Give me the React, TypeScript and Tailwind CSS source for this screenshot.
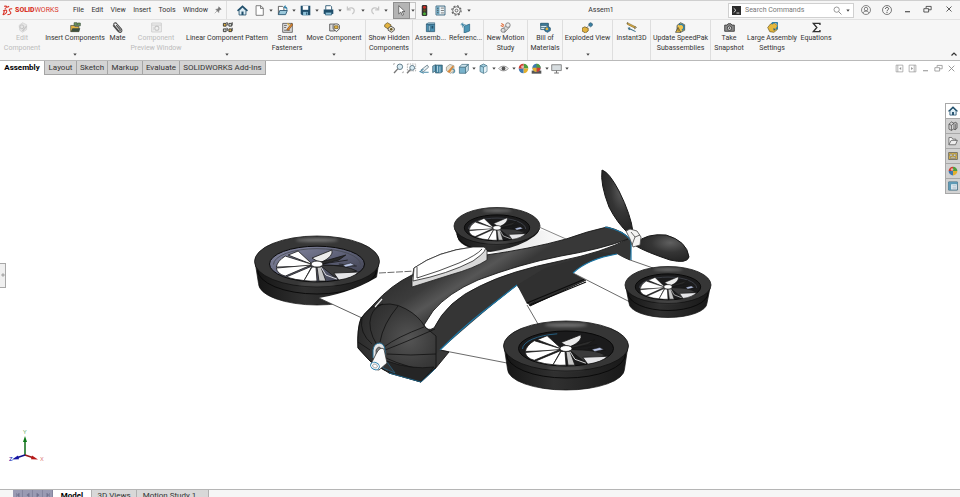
import React from "react";

type IconProps = { children: React.ReactNode; size?: string };

function Icon({ children, size = "size-[11px]" }: IconProps) {
  return (
    <svg viewBox="0 0 16 16" className={`${size} shrink-0`} fill="none" aria-hidden="true">
      {children}
    </svg>
  );
}

const BLUE = "#2f7fa6";
const NAVY = "#1f4e6b";
const GOLD = "#e3b341";
const INK = "#4a4a4a";

const art = {
  home: (
    <>
      <path d="M3 8v6.5h10V8L8 3z" fill="#dcecf4" stroke={NAVY} strokeWidth="1.2" />
      <path d="M.8 8.6 8 1.8l7.2 6.8" stroke={NAVY} strokeWidth="2.2" />
      <path d="M6.5 14.5V9.5h3v5z" fill={NAVY} />
    </>
  ),
  doc: <path d="M3 1h7l3.500 3.500V15H3zM9.500 1v4h4" fill="#fff" stroke="#666" strokeWidth="1.2" />,
  open: (
    <>
      <path d="M2 14V2h6l2 2v4" fill="#fff" stroke={INK} strokeWidth="1.2" />
      <path d="m2 14 2-6h11l-2.500 6z" fill="#9cc9dc" stroke={NAVY} strokeWidth="1.2" />
      <path d="M14.500 7c0-3-1-4-3-4M12.500 1 10.500 3l2 2" stroke={BLUE} strokeWidth="1.5" />
    </>
  ),
  save: (
    <>
      <path d="M1 1h14v14H3l-2-2z" fill={NAVY} />
      <path d="M4 1.500h8V7H4z" fill="#fff" />
      <path d="M4.500 10h7v5h-7z" fill="#8ec1d8" />
      <path d="M9 11h1.500v3H9z" fill={NAVY} />
    </>
  ),
  print: (
    <>
      <path d="M4 7V1h7l1.500 1.500V7" fill="#fff" stroke={NAVY} strokeWidth="1.2" />
      <path d="M1 6.500h14V13H1z" fill={NAVY} />
      <path d="M3.500 10.500h9v4h-9z" fill="#8ec1d8" stroke={NAVY} />
    </>
  ),
  undo: <path d="M2 2v5h5M2.500 6.500C6 2.500 12 4 12 8.500c0 2-1 3.500-3 4.500" stroke="#c6c6c6" strokeWidth="1.800" />,
  redo: <path d="M14 2v5H9M13.500 6.500C10 2.500 4 4 4 8.500c0 2 1 3.500 3 4.500" stroke="#c6c6c6" strokeWidth="1.800" />,
  cursor: <path d="M4 1v12l3-2.800L9 15l2-1-2-4.500h4z" fill="#fff" stroke="#444" />,
  traffic: (
    <>
      <rect x="4" y="0" width="8" height="16" rx="2" fill="#333" />
      <circle cx="8" cy="3.200" r="2.200" fill="#c62f25" />
      <circle cx="8" cy="8" r="1.800" fill="#6b5522" />
      <circle cx="8" cy="12.700" r="2.200" fill="#4caf38" />
    </>
  ),
  list: (
    <>
      <path d="M1.500 1.500h13v13h-13z" fill="#eef4f7" stroke={NAVY} strokeWidth="1.200" />
      <path d="M2 2h4.500v12H2z" fill="#69a3bd" />
      <path d="M8.500 4.500h4.500M8.500 8h4.500M8.500 11.500h4.500M3 5h2M3 8h2M3 11h2" stroke={INK} />
    </>
  ),
  gear: (
    <>
      <circle cx="8" cy="8" r="5.500" stroke="#555" strokeWidth="1.200" />
      <circle cx="8" cy="8" r="6.800" stroke="#555" strokeWidth="1.500" strokeDasharray="2.700 2.640" />
      <circle cx="8" cy="8" r="2" stroke="#555" strokeWidth="1.200" />
    </>
  ),
  user: (
    <>
      <circle cx="8" cy="8" r="7.200" stroke="#555" strokeWidth="1.100" />
      <circle cx="8" cy="6.500" r="2.800" stroke="#555" strokeWidth="1.100" />
      <path d="M3.500 13c.5-2.500 2-3.300 4.500-3.300s4 .8 4.500 3.300" stroke="#555" strokeWidth="1.100" />
    </>
  ),
  help: (
    <>
      <circle cx="8" cy="8" r="7.200" stroke="#444" strokeWidth="1.100" />
      <path d="M5.500 6.300C5.500 3 10.500 3 10.500 6c0 2-2.500 2-2.500 4M8 11.300v1.500" stroke="#444" strokeWidth="1.500" />
    </>
  ),
  minimize: <path d="M3.500 12h9" stroke="currentColor" strokeWidth="1.800" />,
  restore: (
    <>
      <path d="M5.500 5.500v-3h9v6H10" stroke="currentColor" strokeWidth="1.400" />
      <path d="M1.500 6.500H10v6H1.500z" stroke="currentColor" strokeWidth="1.400" />
    </>
  ),
  close: <path d="m3 3 10 10M13 3 3 13" stroke="currentColor" strokeWidth="1.600" />,
  search: (
    <>
      <circle cx="6.500" cy="6.500" r="4.700" stroke="#777" strokeWidth="1.300" />
      <path d="m10 10 5 5" stroke="#777" strokeWidth="1.500" />
    </>
  ),
  prompt: (
    <>
      <path d="M0 0h16v16H0z" fill="#2b2b2b" />
      <path d="m3 4 4 3.800L3 11.500M8 12.500h5" stroke="#fff" strokeWidth="1.400" />
    </>
  ),
  pin: <path d="M9.500 1.500 14.500 6.500 12 7 9.500 10v3L3.500 6.500h3L9 4zM6 10l-4.500 4.500" fill="#777" stroke="#777" />,
  editComponent: (
    <>
      <path d="M3 5 8 1l6 3v7l-6 4-4-3z" fill="#e6e6e6" stroke="#cfcfcf" />
      <circle cx="7" cy="7" r="2.800" stroke="#c2c2c2" strokeWidth="1.400" />
      <path d="m8 13 6-7" stroke="#c6c6c6" strokeWidth="2" />
    </>
  ),
  insert: (
    <>
      <path d="M1 14V5h5l1 1.500h6V14z" fill={GOLD} stroke="#4b4a3c" />
      <path d="M1 14 3.500 9H15l-2 5z" fill="#3d4f40" />
      <path d="M6 1h4v4H6zM11 1.500h4v4h-4z" fill="#6c9a56" stroke="#3b4f3d" />
    </>
  ),
  mate: (
    <path
      d="m1.500 5 7 8.500c3 3.500 8 .5 5-3.500L7 2.500C4.500-.5 1 2.500 3.500 5.500l6 7c1.500 1.500 3.500 0 2.200-1.500L6 4.500"
      stroke="#4b4b4b"
      strokeWidth="1.500"
    />
  ),
  preview: (
    <>
      <path d="M1 1.500h14v13H1zM1 4.500h14" fill="#f1f1f1" stroke="#cdcdcd" strokeWidth="1.300" />
      <circle cx="8.500" cy="9" r="3" stroke="#c4c4c4" strokeWidth="1.500" />
      <path d="M3.500 7v5" stroke="#cfcfcf" />
    </>
  ),
  pattern: (
    <>
      <path d="M2 2h4v4H2zM10 10h4v4h-4z" fill={GOLD} stroke="#333" strokeWidth="1.300" />
      <path d="M10 2h4v4h-4zM2 10h4v4H2z" fill="#cfd6d0" stroke="#333" strokeWidth="1.300" />
      <path d="M6 1h2v4M14 1h1.500v4M6 9h2v4M14 9h1.500v4" stroke="#333" />
    </>
  ),
  fasteners: (
    <>
      <path d="M1 2h14v13H1z" fill="#dedede" stroke="#555" strokeWidth="1.200" />
      <path d="M3 5h4M3 8h3M3 12h9" stroke="#666" strokeWidth="1.300" />
      <path d="m7 11 7-9 1.500 2-6 8z" fill="#e58c33" stroke="#7b4a1a" />
      <path d="m8 2 3 3" stroke="#e3b341" strokeWidth="2" />
    </>
  ),
  move: (
    <>
      <path d="M1 3h7v10H1z" fill="#ddd" stroke="#555" strokeWidth="1.300" />
      <path d="M6 5c1-3 8-3 9 0v5l-4 4-5-4z" fill="#f2f2f2" stroke="#444" strokeWidth="1.300" />
      <path d="M8 5.500h5v4H8z" fill={GOLD} stroke="#6f5720" />
    </>
  ),
  showHidden: (
    <>
      <path d="m1 4 4-3 5 3v3l-4 3-5-3z" fill={GOLD} stroke="#5f5021" />
      <path d="m6 9 4-3 5 3v3l-4 3-5-3z" fill="#e8e2cf" stroke="#444" strokeWidth="1.200" />
      <circle cx="10.500" cy="10.500" r="1.800" fill="#6a5a28" />
    </>
  ),
  assembly: (
    <>
      <path d="M2 3h12v11H2z" fill="#4a90b2" stroke="#24506a" />
      <path d="M2 3 5 1h9v2zM5 5h2.500v8H5z" fill="#a8d0e1" stroke="#24506a" strokeWidth=".7" />
      <path d="M9.500 5.500h2.500v4H9.500z" fill="#24506a" />
    </>
  ),
  reference: (
    <>
      <path d="M6 6 14 3v10l-8 3z" fill="#4d96b6" stroke="#24607f" />
      <path d="M4 1v7M1 4h7M2 2l4 4" stroke="#337da0" strokeWidth="1.200" />
    </>
  ),
  motion: (
    <>
      <path d="m2 12 8-8 4 3-7 8z" fill="#d8d8d8" stroke="#777" strokeWidth="1.200" />
      <circle cx="11.500" cy="4.500" r="3.300" fill="#eee" stroke="#777" strokeWidth="1.200" />
      <circle cx="4.500" cy="12" r="3" fill="#ddd" stroke="#777" strokeWidth="1.200" />
      <path d="m2 2 4 3M1 5l4 2" stroke="#e06a35" strokeWidth="1.600" />
    </>
  ),
  bom: (
    <>
      <path d="M1 2h11v9H1z" fill="#d7e8ef" stroke="#2d5d75" strokeWidth="1.200" />
      <path d="M1 2h11v3H1zM1 8h11" fill="#3f7b99" stroke="#2d5d75" />
      <path d="m7 9 4-3 4 2.500v4L11 15l-4-2z" fill="#3379a0" stroke="#1f4e6b" />
      <circle cx="10" cy="10" r="2" fill={GOLD} />
    </>
  ),
  exploded: (
    <>
      <path d="m0 9 4-2 5 2v4l-4 3-5-3z" fill={GOLD} stroke="#5f5021" />
      <path d="m7 8 4-4" stroke="#444" strokeDasharray="1.500 1" strokeWidth="1.300" />
      <path d="M10 2.500 12.500 1 15 2.500V5l-2.500 2L10 5z" fill="#3c82a5" stroke="#24506a" />
    </>
  ),
  instant: (
    <>
      <path d="m2 1 11 5.500v2.500L2 3.500z" fill={GOLD} stroke="#6c5520" strokeWidth=".8" />
      <path d="m1 2 2-1M13 6l2 2-3 2" stroke="#6c5e2d" strokeWidth="1.300" />
      <path d="m4 9 10 5M6 8.500 3.500 9 5 11.500" stroke="#3c6f87" strokeWidth="1.500" />
    </>
  ),
  speedpak: (
    <>
      <path d="m3 5 5-4 6 3v8l-6 3-5-3z" fill="#f0c44c" stroke="#42535b" strokeWidth="1.200" />
      <path d="M6 4a4.500 4.500 0 1 1 4 8" stroke="#2f7fa6" strokeWidth="2.200" />
      <path d="M4.500 8 .8 15h7.500z" fill="#ffd24a" stroke="#333" />
      <path d="M4.500 10.500v3" stroke="#222" />
    </>
  ),
  camera: (
    <>
      <path d="M1 4.500h3.500L6 2.500h4l1.500 2H15v9H1z" fill="#8a8a8a" stroke="#333" strokeWidth="1.200" />
      <circle cx="8" cy="9" r="3.200" fill="#ddd" stroke="#333" strokeWidth="1.200" />
      <circle cx="8" cy="9" r="1.200" fill="#444" />
    </>
  ),
  large: (
    <>
      <path d="m1 8 4-5 5-2 5 4v6l-5 4-6-1z" fill="#e6b83c" stroke="#6e5a22" />
      <path d="M7 3a5 5 0 1 1 6 7" stroke="#2f7fa6" strokeWidth="2.600" />
      <path d="m9 9 4 1-3 3z" fill="#2f5f7a" />
    </>
  ),
  sigma: <path d="M13 4.500V2H3.500l5 6-5 6H13v-2.500" stroke="#2f2f2f" strokeWidth="2" />,
  zoomFit: (
    <>
      <circle cx="10" cy="5.500" r="4" fill="#d9ecf4" stroke="#567280" strokeWidth="1.300" />
      <path d="m7 8.500-5.500 6" stroke="#777" strokeWidth="2" />
      <path d="M1 3V1h2M13 14h2v-2" stroke="#999" />
    </>
  ),
  zoomArea: (
    <>
      <path d="M2 1.500h12v10H2z" stroke="#888" strokeDasharray="2 1.500" />
      <circle cx="9" cy="7" r="3.500" fill="#d9ecf4" stroke="#567280" strokeWidth="1.300" />
      <path d="m6.500 9.500-5 5.500" stroke="#777" strokeWidth="2" />
    </>
  ),
  prevView: (
    <>
      <path d="m3 10 9-7 2 3-8 7z" fill="#e6eff3" stroke="#667b85" strokeWidth="1.200" />
      <path d="M7 13.500H14M6.500 9 1.500 12.500 7 15" stroke="#4a8ba8" strokeWidth="1.500" />
    </>
  ),
  section: (
    <>
      <path d="M1 4.500 5 2.500v9L1 14z" fill="#7eb6cf" stroke="#345b6c" />
      <path d="M5 3h10v10l-3 1.500H5z" fill="#4486a3" stroke="#345b6c" />
      <path d="M8 4v9M11.500 5v9" stroke="#c7e1eb" strokeWidth="1.200" />
    </>
  ),
  dynamic: (
    <>
      <path d="m2 6 5-4 6 2v8l-5 3-6-4z" fill="#e4e0d2" stroke="#8c8778" />
      <path d="m3 13 8-9 2 1-6 9z" fill="#db8a3c" />
      <path d="M10 9c2-1 5 1 4 4l-3 2" stroke="#4d89a4" strokeWidth="1.500" />
    </>
  ),
  orientation: (
    <>
      <path d="M2 6h9v9H2z" fill="#78b2cb" stroke="#37677c" />
      <path d="m2 6 3.500-4H15l-4 4zM11 6l4-4v8.500L11 15z" fill="#cfe4ed" stroke="#37677c" />
    </>
  ),
  display: (
    <>
      <path d="m3 4 5-2.500L13 4v8.500L8 15l-5-2.500z" fill="#a3cfe0" stroke="#37677c" />
      <path d="M3 4 8 6l5-2M8 6v9" stroke="#37677c" />
      <path d="m8.500 6.500 4-2V12l-4 2.500z" fill="#e5f1f6" />
    </>
  ),
  eye: (
    <>
      <path d="M1 8c3.500-4.500 10.500-4.500 14 0-3.500 4.500-10.500 4.500-14 0z" fill="#eee" stroke="#888" strokeWidth="1.200" />
      <circle cx="8" cy="8" r="2.800" fill="#555" />
    </>
  ),
  ball: (
    <>
      <path d="M8 8V1a7 7 0 0 1 7 7z" fill="#4e9d3d" />
      <path d="M8 8h7a7 7 0 0 1-7 7z" fill="#e3b02e" />
      <path d="M8 8v7a7 7 0 0 1-7-7z" fill="#3f79b0" />
      <path d="M8 8H1a7 7 0 0 1 7-7z" fill="#cf3d30" />
      <circle cx="6.500" cy="5.500" r="2" fill="#fff" opacity=".6" />
    </>
  ),
  scene: (
    <>
      <path d="M1 11h14v4.500H1z" fill="#555" />
      <circle cx="8" cy="7" r="6" fill="#3f79b0" />
      <path d="M8 7V1a6 6 0 0 1 6 6z" fill="#4e9d3d" />
      <path d="M8 7h6a6 6 0 0 1-6 6z" fill="#cf3d30" />
      <path d="M8 7v6a6 6 0 0 1-6-6z" fill="#e3b02e" />
    </>
  ),
  monitor: (
    <>
      <path d="M1 2.500h14v8.500H1z" fill="#d7dde0" stroke="#777" strokeWidth="1.200" />
      <path d="M8 11v3M4.500 14.500h7" stroke="#777" strokeWidth="1.500" />
    </>
  ),
  paneLeft: (
    <>
      <path d="M2 2h12v12H2zM5 2v12" stroke="currentColor" strokeWidth="1.200" />
      <path d="M11 5.500v5L7.500 8z" fill="currentColor" />
    </>
  ),
  paneRight: (
    <>
      <path d="M2 2h12v12H2zM11 2v12" stroke="currentColor" strokeWidth="1.200" />
      <path d="M5.500 5.500v5L9 8z" fill="currentColor" />
    </>
  ),
  library: (
    <>
      <path d="m1.500 5 4-3.500 4 2v9L5.500 15l-4-2zM1.500 5l4 2 4-3.500M5.500 7v8" fill="#d5d5d5" stroke="#444" strokeWidth="1.100" />
      <path d="m9.500 3.500 2-1.500 3 1.500v8l-3 2.500-2-1M11.500 5v9" fill="#bbb" stroke="#444" strokeWidth="1.100" />
    </>
  ),
  folder: (
    <>
      <path d="M1.500 14V2.500h4.500L7.500 5h5v3" fill="#fff" stroke="#555" strokeWidth="1.200" />
      <path d="m1.500 14 3.500-7h10l-3 7z" fill="#eee" stroke="#555" strokeWidth="1.200" />
    </>
  ),
  palette: (
    <>
      <path d="M1 2.500h14v11H1z" fill="#d9b64b" stroke="#555" strokeWidth="1.200" />
      <path d="M3 5h3.500v3H3zM9 5h3.500v3H9zM4 10h8v2H4z" fill="#fff" stroke="#555" strokeWidth=".8" />
    </>
  ),
  properties: (
    <>
      <path d="M1 1.500h14v13H1z" fill="#eaf2f6" stroke="#2d5d75" strokeWidth="1.300" />
      <path d="M1 1.500h14V5H1zM1 5h4v9.500H1z" fill="#5e9ab6" />
      <path d="M7 7.500h6M7 10h6M7 12.500h6" stroke="#9ab" />
    </>
  ),
};

type ArtName = keyof typeof art;

function Caret() {
  return (
    <svg viewBox="0 0 4 3" className="h-[3px] w-1 shrink-0" aria-hidden="true">
      <path d="M.3.500h3.400L2 2.700z" fill="#444" />
    </svg>
  );
}

function CaretButton({ label, width = "w-[10px]" }: { label: string; width?: string }) {
  return (
    <button aria-label={label} className={`flex h-3 items-center justify-center ${width}`}>
      <Caret />
    </button>
  );
}

function ToolButton({ name, label, width = "w-[13px]" }: { name: ArtName; label: string; width?: string }) {
  return (
    <button aria-label={label} className={`flex h-[14px] items-center justify-center ${width}`}>
      <Icon>{art[name]}</Icon>
    </button>
  );
}

function Logo() {
  return (
    <div className="flex w-[65px] items-center gap-[2px] pl-[2px] text-[#d9362b]">
      <svg viewBox="0 0 20 20" className="size-[11px]" fill="none" stroke="currentColor" strokeWidth="2" aria-hidden="true">
        <path d="M4 2.500c5-1.500 6 1 1 4.500M2 11c6-3.500 8-1 6 2.500C6.500 16 3 18 2 17.500l2.500-6" />
        <path d="M18.500 7c-5-1-7 2-4 4.500s2 6-4.500 6M9 4l4-1.500" />
      </svg>
      <span className="leading-[10px]">
        <b className="font-black">SOLID</b>WORKS
      </span>
    </div>
  );
}

const menus = ["File", "Edit", "View", "Insert", "Tools", "Window"];

function TitleBar() {
  return (
    <header className="flex h-5 shrink-0 items-center border-b border-t border-b-[#e2e2e2] border-t-[#cfcfcf]">
      <div className="flex w-[226px] shrink-0 items-center">
        <Logo />
        <nav className="ml-2 flex w-[135px] justify-between">
          {menus.map((m) => (
            <button key={m}>{m}</button>
          ))}
        </nav>
        <button aria-label="Pin menu" className="ml-[6px] flex">
          <Icon size="size-2">{art.pin}</Icon>
        </button>
      </div>
      <div className="flex h-full shrink-0 items-center border-l border-[#dedede] pl-[9px]">
        <ToolButton name="home" label="Home" />
        <span className="w-1" />
        <ToolButton name="doc" label="New" />
        <CaretButton label="New options" />
        <ToolButton name="open" label="Open" />
        <CaretButton label="Open options" />
        <ToolButton name="save" label="Save" />
        <CaretButton label="Save options" />
        <ToolButton name="print" label="Print" />
        <CaretButton label="Print options" />
        <ToolButton name="undo" label="Undo" />
        <CaretButton label="Undo options" />
        <ToolButton name="redo" label="Redo" />
        <CaretButton label="Redo options" />
        <button aria-label="Select" className="ml-[2px] flex h-[17px] w-[17px] items-center justify-center border border-[#8f8f8f] bg-[#b4b4b4]">
          <Icon>{art.cursor}</Icon>
        </button>
        <button aria-label="Select options" className="flex h-[17px] w-[6px] items-center justify-center border border-l-0 border-[#c4c4c4]">
          <Caret />
        </button>
        <ToolButton name="traffic" label="Rebuild" width="w-4" />
        <ToolButton name="list" label="File properties" width="w-4" />
        <ToolButton name="gear" label="Options" width="w-4" />
        <CaretButton label="Options menu" />
      </div>
      <h1 className="flex-1 text-center">Assem1</h1>
      <label className="flex h-[15px] w-[126px] shrink-0 items-center gap-1 border border-[#d0d0d0] bg-white px-[3px]">
        <Icon size="size-[9px]">{art.prompt}</Icon>
        <input aria-label="Search Commands" placeholder="Search Commands" className="min-w-0 flex-1 outline-none placeholder:text-[#777]" />
        <Icon size="size-[9px]">{art.search}</Icon>
        <Caret />
      </label>
      <div className="flex shrink-0 text-[#333]">
        <button aria-label="Account" className="flex w-[23px] justify-center"><Icon size="size-[10px]">{art.user}</Icon></button>
        <button aria-label="Help" className="flex w-5 justify-center"><Icon size="size-[10px]">{art.help}</Icon></button>
        <button aria-label="Minimize" className="flex w-5 justify-center"><Icon size="size-[9px]">{art.minimize}</Icon></button>
        <button aria-label="Restore" className="flex w-5 justify-center"><Icon size="size-[9px]">{art.restore}</Icon></button>
        <button aria-label="Close" className="flex w-[23px] justify-center"><Icon size="size-2">{art.close}</Icon></button>
      </div>
    </header>
  );
}

type Command = { lines: string[]; icon: ArtName; width: string; caret?: boolean; disabled?: boolean; divider?: boolean };

const commands: Command[] = [
  { lines: ["Edit", "Component"], icon: "editComponent", width: "w-11", disabled: true },
  { lines: ["Insert Components"], icon: "insert", width: "w-[62px]", caret: true },
  { lines: ["Mate"], icon: "mate", width: "w-[23px]" },
  { lines: ["Component", "Preview Window"], icon: "preview", width: "w-[54px]", disabled: true },
  { lines: ["Linear Component Pattern"], icon: "pattern", width: "w-[88px]", caret: true },
  { lines: ["Smart", "Fasteners"], icon: "fasteners", width: "w-8" },
  { lines: ["Move Component"], icon: "move", width: "w-[63px]", caret: true, divider: true },
  { lines: ["Show Hidden", "Components"], icon: "showHidden", width: "w-[47px]", divider: true },
  { lines: ["Assemb..."], icon: "assembly", width: "w-[35px]", caret: true },
  { lines: ["Referenc..."], icon: "reference", width: "w-9", caret: true, divider: true },
  { lines: ["New Motion", "Study"], icon: "motion", width: "w-11", divider: true },
  { lines: ["Bill of", "Materials"], icon: "bom", width: "w-[35px]", divider: true },
  { lines: ["Exploded View"], icon: "exploded", width: "w-[50px]", caret: true, divider: true },
  { lines: ["Instant3D"], icon: "instant", width: "w-[38px]", divider: true },
  { lines: ["Update SpeedPak", "Subassemblies"], icon: "speedpak", width: "w-[60px]", divider: true },
  { lines: ["Take", "Snapshot"], icon: "camera", width: "w-9" },
  { lines: ["Large Assembly", "Settings"], icon: "large", width: "w-[50px]" },
  { lines: ["Equations"], icon: "sigma", width: "w-[38px]" },
];

function Ribbon() {
  return (
    <div className="flex h-[41px] shrink-0 border-b border-[#b9b9b9]">
      {commands.map((c) => (
        <button
          key={c.lines[0]}
          disabled={c.disabled}
          className={`flex shrink-0 flex-col items-center whitespace-nowrap pt-[2px] disabled:text-[#bcbcbc] ${c.width} ${
            c.divider ? "border-r border-[#dedede]" : ""
          }`}
        >
          <Icon>{art[c.icon]}</Icon>
          {c.lines.map((l) => (
            <span key={l}>{l}</span>
          ))}
          {c.caret && <span className="mt-[10px] flex"><Caret /></span>}
        </button>
      ))}
      <button aria-label="Collapse ribbon" className="ml-auto flex items-end px-[2px] pb-[2px]">
        <Icon size="size-2"><path d="m3 11 5-5 5 5" stroke="#333" strokeWidth="2.400" /></Icon>
      </button>
    </div>
  );
}

const tabs = [
  { name: "Layout", width: "w-8" },
  { name: "Sketch", width: "w-[31px]" },
  { name: "Markup", width: "w-[35px]" },
  { name: "Evaluate", width: "w-[37px]" },
  { name: "SOLIDWORKS Add-Ins", width: "w-[87px]" },
];

function TabRow() {
  return (
    <div className="flex h-[14px] shrink-0 bg-white">
      <div role="tablist" className="flex text-[8px]">
        <button role="tab" aria-selected="true" className="w-11 font-bold text-black">Assembly</button>
        {tabs.map((t) => (
          <button
            key={t.name}
            role="tab"
            aria-selected="false"
            className={`whitespace-nowrap border-b border-l border-[#a5a5a5] bg-[#d4d4d4] last:border-r ${t.width}`}
          >
            {t.name}
          </button>
        ))}
      </div>
      <div className="ml-[126px] flex items-center">
        <ToolButton name="zoomFit" label="Zoom to fit" />
        <ToolButton name="zoomArea" label="Zoom to area" />
        <ToolButton name="prevView" label="Previous view" />
        <ToolButton name="section" label="Section view" />
        <ToolButton name="dynamic" label="Dynamic annotation views" />
        <ToolButton name="orientation" label="View orientation" />
        <CaretButton label="Orientation options" width="w-[7px]" />
        <ToolButton name="display" label="Display style" />
        <CaretButton label="Display options" width="w-[7px]" />
        <ToolButton name="eye" label="Hide or show items" />
        <CaretButton label="Visibility options" width="w-[7px]" />
        <ToolButton name="ball" label="Edit appearance" />
        <ToolButton name="scene" label="Apply scene" />
        <CaretButton label="Scene options" width="w-[7px]" />
        <ToolButton name="monitor" label="View settings" />
        <CaretButton label="View setting options" width="w-[7px]" />
      </div>
      <div className="ml-auto flex items-center pr-[2px] text-[#909090]">
        {(["paneLeft", "paneRight", "minimize", "restore", "close"] as ArtName[]).map((n) => (
          <button key={n} aria-label={`Document ${n}`} className="flex w-[13px] justify-center">
            <Icon size="size-[9px]">{art[n]}</Icon>
          </button>
        ))}
      </div>
    </div>
  );
}

type RotorProps = { x: number; y: number; rx: number; ry: number; depth: number; bowl?: string; rim?: boolean };

function Rotor({ x, y, rx, ry, depth, bowl = "#1b1b1c", rim = false }: RotorProps) {
  const hx = rx * 0.76;
  const hy = ry * 0.7;
  const s = rx / 63;
  const v = ry / 25.5;
  return (
    <g>
      <path
        d={`M${x - rx + 1} ${y + 3} L${x - rx + 4} ${y + depth} A${rx - 4} ${ry - 4} 0 0 0 ${x + rx - 4} ${y + depth} L${x + rx - 1} ${y + 3}Z`}
        fill="url(#skirt)"
        stroke="#111"
        strokeWidth=".7"
      />
      <path
        d={`M${x - rx + 3} ${y + 8} A${rx - 3} ${ry - 1} 0 0 0 ${x + rx - 3} ${y + 8}`}
        stroke="#080808"
        strokeWidth=".9"
        fill="none"
      />
      <ellipse cx={x} cy={y} rx={rx} ry={ry} fill="#363636" stroke="#111" strokeWidth=".8" />
      <ellipse cx={x} cy={y - ry * 0.84} rx={rx * 0.34} ry={ry * 0.08} fill="#999" opacity=".6" filter="url(#soften)" />
      <ellipse cx={x} cy={y + ry * 0.9} rx={rx * 0.3} ry={ry * 0.05} fill="#888" opacity=".4" filter="url(#soften)" />
      <ellipse cx={x} cy={y + ry * 0.1} rx={hx} ry={hy} fill={bowl} stroke="#090909" strokeWidth="1" />
      <path
        d={`M${x - hx + 4} ${y + 3} A${hx - 4} ${hy - 2} 0 0 1 ${x + hx - 4} ${y + 3}`}
        fill="none"
        stroke={rim ? "#276f9a" : "#444850"}
        strokeWidth=".8"
        strokeDasharray={rim ? "40 200" : undefined}
      />
      <g transform={`translate(${x} ${y + ry * 0.1}) scale(${s} ${v})`} stroke="#161616" strokeWidth=".8" strokeLinejoin="round">
        <path d="M-6-1-19-13-29-9-6 0Z" fill="#fff" />
        <path d="M-6 0-32-8Q-40-3-41 3L-6 2Z" fill="#fff" />
        <path d="m-6 1-35 3q1 6 9 8Z" fill="#fff" />
        <path d="m-5 2-26 11q10 3 18 3.500Z" fill="#fff" />
        <path d="m-5 3-8 13.500q7 1 13 .5L-1 3Z" fill="#fff" />
        <path d="M0-3-5-6Q5-10 15-14 17-8 5-2Z" fill="#ececec" />
        <path d="m0 3 2 14H9L4 3Z" fill="#c7c7c7" />
        <path d="m4 2 14 11 22-6Q30 1 5 1Z" fill="#3a3a3b" />
        <path d="m17 9 25-1q-6 6-20 8Z" fill="#e5e5e8" />
        <path d="M4-2 29-9 22-4 5 0Z" fill="#2b2b2b" />
        <path d="m5 1 35 1M5 0l26-4M22 0l12 1" fill="none" />
        <path d="m26 1 8-2 4 2-9 2Z" fill="#b9c5e5" strokeWidth=".5" />
        <path d="M4 3 9 11l11 4" fill="none" stroke="#fff" />
        <ellipse cx="0" cy="0" rx="6" ry="3" fill="#fff" />
      </g>
    </g>
  );
}

function Aircraft() {
  return (
    <svg
      viewBox="6 75 939 414"
      className="min-h-0 min-w-0 flex-1"
      role="img"
      aria-label="Four rotor aircraft assembly"
    >
      <defs>
        <linearGradient id="skirt" x1="0" y1="0" x2="1" y2="0">
          <stop offset="0" stopColor="#151515" />
          <stop offset=".4" stopColor="#303030" />
          <stop offset="1" stopColor="#181818" />
        </linearGradient>
        <linearGradient id="bowl" x1="0" y1="0" x2="1" y2="1">
          <stop offset="0" stopColor="#8b8da6" />
          <stop offset=".5" stopColor="#5d6076" />
          <stop offset="1" stopColor="#3a3b48" />
        </linearGradient>
        <linearGradient id="hull" gradientUnits="userSpaceOnUse" x1="400" y1="265" x2="435" y2="320">
          <stop offset="0" stopColor="#2c2c2c" />
          <stop offset=".5" stopColor="#3c3c3c" />
          <stop offset=".75" stopColor="#565656" />
          <stop offset="1" stopColor="#383838" />
        </linearGradient>
        <radialGradient id="dome" cx=".65" cy=".45" r=".75">
          <stop offset="0" stopColor="#555" />
          <stop offset=".5" stopColor="#393939" />
          <stop offset="1" stopColor="#262626" />
        </radialGradient>
        <radialGradient id="blade" cx=".65" cy=".3" r=".8">
          <stop offset="0" stopColor="#606060" />
          <stop offset=".45" stopColor="#353535" />
          <stop offset="1" stopColor="#202020" />
        </radialGradient>
        <linearGradient id="wing" x1="0" y1="0" x2="1" y2="0">
          <stop offset="0" stopColor="#ddd" />
          <stop offset="1" stopColor="#fff" />
        </linearGradient>
        <filter id="soften" x="-20%" y="-200%" width="140%" height="500%">
          <feGaussianBlur stdDeviation="1.500" />
        </filter>
      </defs>

      <Rotor x={317} y={261.500} rx={62.500} ry={25.500} depth={22} bowl="url(#bowl)" />
      <path d="M319 298Q355 292 382 274L414 271 361 318Z" fill="#fff" />
      <path d="m319 298 43 20" stroke="#333" strokeWidth=".8" />
      <path d="m379 273 37-2" stroke="#444" strokeWidth=".8" strokeDasharray="7 1.500" />

      <Rotor x={497} y={226} rx={43} ry={18.500} depth={11} />
      <path d="M490 252Q526 247 541 230L571 239 520 252Z" fill="url(#wing)" />
      <path d="m539 227 27 12" stroke="#555" strokeWidth=".7" />

      <path d="M517 283 540 262 575 262 586 280 530 306Z" fill="#303030" stroke="#151515" />
      <path d="M517 285 527 305 538 325 507 362 440 350Z" fill="#fff" />
      <path d="m527 305 11 19M440 350l67 13" stroke="#444" strokeWidth=".8" />

      <path
        d="M412 275Q391 285 374 304L361 318Q357 328 358 348L370 361 384 370 421 382 435 369 449 352 440 350Q465 325 480 314L517 285 531 304 573 273Q589 259 616 254L630 260 631 241Q625 231 607 227 588 231 566 239 530 249 486 255L465 256Z"
        fill="url(#hull)"
        stroke="#171717"
        strokeWidth=".9"
      />
      <path
        d="M427 329Q447 302 480 286 506 272 560 262 600 254 630 239L630 260 616 254Q589 259 573 273L530 304 517 285Q489 307 440 350L436 354V335Z"
        fill="#353535"
      />
      <path d="M527 304 585 281 573 273Q589 259 617 254L600 252 545 268 517 285Z" fill="#303030" />
      <path d="m527 303 58-24M530 305l56-23" stroke="#0c0c0c" strokeWidth="1.200" />
      <path d="M573 273Q588 259 617 254L631 262 652 268 628 303Z" fill="#fff" />
      <path d="M630 260 653 268M573 273l59 30" stroke="#444" strokeWidth=".8" />
      <path d="M440 350Q460 330 480 314L517 285M573 273Q588 259 617 254M605 227Q625 231 631 241V260" fill="none" stroke="#1b76a5" strokeWidth="1.200" />
      <path
        d="M628 239Q602 249 561 256 520 264 478 280 448 293 433 311L424 325Q427 332 434 328 447 301 480 286 510 271 560 261 604 252 628 239Z"
        fill="#fff"
        stroke="#191919"
        strokeWidth=".9"
      />

      <path
        d="M361 319Q364 313 372 307 391 300 406 309 419 316 425 327L436 336V367L421 382 389 373 370 361 358 348Q357 330 361 319Z"
        fill="url(#dome)"
        stroke="#101010"
        strokeWidth=".8"
      />
      <path
        d="M377 345Q367 329 371 316 374 307 383 304M380 342Q383 324 398 306M384 347Q397 337 424 327M385 350Q406 342 435 329M387 354Q410 356 436 354M386 358Q407 368 433 371M372 344Q359 333 362 318M370 350 358 342"
        fill="none"
        stroke="#101010"
        strokeWidth=".8"
      />
      <path d="M387 361Q411 370 434 367L421 382 389 373Z" fill="#252525" stroke="#101010" strokeWidth=".7" />
      <path d="m389 373 32 9 14-13" fill="none" stroke="#23749e" strokeWidth=".8" />
      <path d="m375 307 7-8" stroke="#eee" strokeWidth="1.200" />
      <path d="m383 366 4-4 8 11-12-5Z" fill="#333" stroke="#26668a" strokeWidth=".7" />
      <path d="M373 358V350Q374 343 380 343 386 344 385 356" fill="#e5e5e5" stroke="#226b91" />
      <path d="M376 356V350Q379 344 382 350V358" fill="#7e7e7e" stroke="#222" strokeWidth=".6" />
      <path d="m376 354-5 10q0 6 8 6l8-7-3-14q-4-3-8 5Z" fill="#fafafa" stroke="#333" strokeWidth=".8" />
      <ellipse cx="375" cy="366" rx="4.500" ry="3.500" fill="#fff" stroke="#247eab" strokeWidth=".9" transform="rotate(25 375 366)" />
      <ellipse cx="375" cy="366" rx="2.500" ry="1.800" fill="#fff" stroke="#777" strokeWidth=".6" transform="rotate(25 375 366)" />

      <path d="M412 278 414 268Q438 251 473 247H484L487 250V260Q475 268 450 275L412 287Z" fill="#d8d8d8" stroke="#222" strokeWidth=".8" />
      <path d="M413 281 414 268Q438 251 473 247H484Q490 249 473 261 448 274 413 281Z" fill="#fff" stroke="#222" strokeWidth=".8" />
      <path d="M417 278Q440 271 459 263 477 255 482 249M417 267v11" fill="none" stroke="#222" strokeWidth=".8" />

      <Rotor x={668} y={285} rx={43} ry={18.500} depth={18} />
      <Rotor x={566} y={346} rx={62.500} ry={25} depth={23} rim />

      <path d="M602 170Q600 184 609 207 617 223 629 234L633 232Q631 215 619 191 609 172 602 170Z" fill="url(#blade)" stroke="#171717" />
      <path d="M636 243Q647 233 666 235 687 241 689 257 687 264 670 260 646 252 636 246Z" fill="url(#blade)" stroke="#171717" />
      <path d="m626 231 4-2 7 2 4 6-1 8-7 2-3-8Z" fill="#f3f3f3" stroke="#444" strokeWidth=".8" />
      <path d="m631 232 4 5-3 8M635 237l5-2" fill="none" stroke="#444" strokeWidth=".8" />
    </svg>
  );
}

function Triad() {
  return (
    <svg viewBox="0 0 40 40" className="absolute bottom-[22px] left-[6px] size-10" fontFamily="Roboto, sans-serif" fontSize="6" aria-label="Orientation axes">
      <path d="M19 28V14" stroke="#0b6b14" strokeWidth="1.500" />
      <path d="m17 15 2-6 2 6z" fill="#0b7a17" />
      <path d="m19 28 9 3" stroke="#9a1717" strokeWidth="1.500" />
      <path d="m26 28.500 6 4-7-.2z" fill="#b81818" />
      <path d="m19 28-9 3" stroke="#11118a" strokeWidth="1.500" />
      <path d="m12 28.500-6 4 7-.2z" fill="#1414a5" />
      <text x="17" y="7" fill="#77b677">Y</text>
      <text x="34" y="34" fill="#df8c8c">X</text>
      <text x="3" y="34" fill="#1616b0">Z</text>
    </svg>
  );
}

const panes: { icon: ArtName; label: string }[] = [
  { icon: "home", label: "Resources" },
  { icon: "library", label: "Design library" },
  { icon: "folder", label: "File explorer" },
  { icon: "palette", label: "View palette" },
  { icon: "ball", label: "Appearances" },
  { icon: "properties", label: "Custom properties" },
];

function Viewport() {
  return (
    <main className="relative flex min-h-0 flex-1 items-stretch bg-white">
      <button aria-label="Show feature tree" className="mb-[14px] flex h-[25px] w-[6px] items-center justify-center self-center border border-l-0 border-[#a8a8a8] bg-[#f0f0f0]">
        <Icon size="size-1"><path d="M8 1v14M1 8h14" stroke="#999" strokeWidth="4" /></Icon>
      </button>
      <Aircraft />
      <nav aria-label="Task pane" className="mt-7 flex w-[15px] flex-col self-start border-l border-t border-[#a8a8a8]">
        {panes.map((p) => (
          <button key={p.label} aria-label={p.label} className="flex h-[15px] items-center justify-center border-b border-[#a8a8a8] bg-[#d2d2d2] first:bg-white">
            <Icon size="size-[10px]">{art[p.icon]}</Icon>
          </button>
        ))}
      </nav>
      <Triad />
    </main>
  );
}

function BottomTabs() {
  return (
    <footer className="flex h-2 shrink-0 overflow-hidden border-t border-[#b5b5b5]">
      <div className="ml-[13px] flex bg-[#9a9bb3]">
        {["m11 3-5 5 5 5zM4 3v10", "m11 3-6 5 6 5z", "m5 3 6 5-6 5z", "m5 3 5 5-5 5zM12 3v10"].map((d, i) => (
          <button key={d} aria-label={["First", "Previous", "Next", "Last"][i]} className="flex w-[10px] justify-center border-r border-[#85869f] pt-[2px]">
            <Icon size="size-[6px]"><path d={d} fill="#73748f" stroke="#73748f" strokeWidth="1.500" /></Icon>
          </button>
        ))}
      </div>
      <div role="tablist" className="flex h-3 text-[8px]">
        <button role="tab" aria-selected="true" className="w-[38px] bg-white font-bold text-black">Model</button>
        <button role="tab" aria-selected="false" className="w-[45px] border-l border-[#b0b0b0] bg-[#d8d8d8]">3D Views</button>
        <button role="tab" aria-selected="false" className="w-[73px] border-x border-[#b0b0b0] bg-[#d8d8d8] pr-[6px]">Motion Study 1</button>
      </div>
    </footer>
  );
}

export default function App() {
  return (
    <div className="flex h-screen flex-col overflow-hidden bg-[#f6f6f6] font-['Roboto','Noto_Sans',sans-serif] text-[7px] leading-[10px] text-[#333]">
      <TitleBar />
      <Ribbon />
      <TabRow />
      <Viewport />
      <BottomTabs />
    </div>
  );
}
